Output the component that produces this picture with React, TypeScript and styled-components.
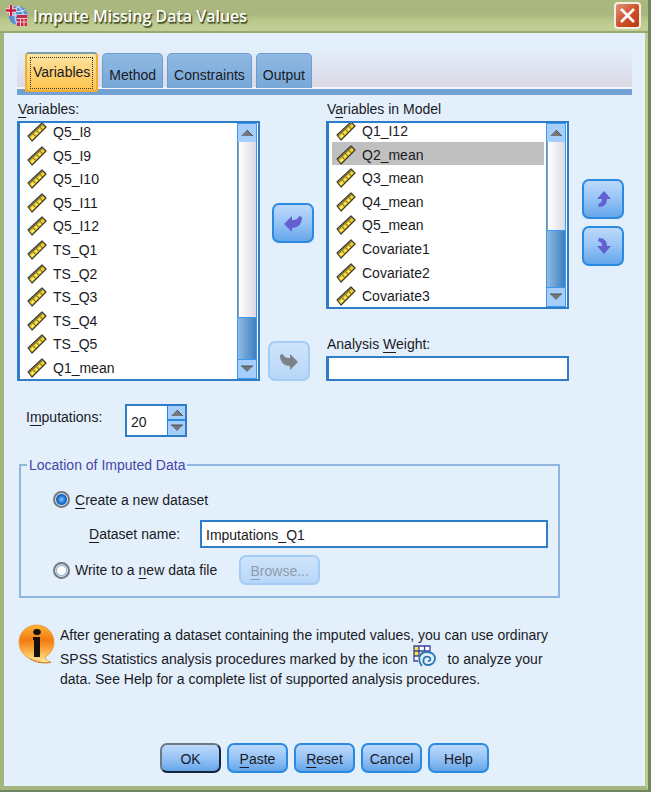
import React, { useState } from "react";
import styled, { createGlobalStyle, css } from "styled-components";

const GlobalStyle = createGlobalStyle`
  * { box-sizing: border-box; }
  body {
    margin: 0;
    background: #6f8760;
    color: #1a1a24;
    font: 14px/16px "Liberation Sans", Arial, sans-serif;
  }
  button, input { font: inherit; color: inherit; }
`;

const DialogWindow = styled.main`
  display: flex;
  flex-direction: column;
  min-height: calc(100vh - 2px);
  margin: 0 3px 2px 0;
  border: solid #a5b77e;
  border-width: 0 3px 4px 4px;
  border-left-color: #a3b57f;
  border-right-color: #b9cb8b;
  background: #e3f0fc;
`;

const TitleBar = styled.header`
  display: flex;
  align-items: center;
  height: 33px;
  margin: 0 -3px 0 -4px;
  padding: 0 6px;
  background: linear-gradient(#aab97e 0, #a9b67f 45%, #b9c78a 65%, #c2cf94 90%);
  border-bottom: 2px solid #97a873;
`;

const Title = styled.h1`
  flex: 1;
  margin: 0 0 0 5px;
  color: #fff;
  font: 600 16px/24px "Open Sans", "Noto Sans", sans-serif;
  text-shadow: 1px 1px 1px #3d4a22, 1px 2px 1px #5c6a3c;
`;

const CloseButton = styled.button`
  display: flex;
  align-items: center;
  justify-content: center;
  width: 27px;
  height: 27px;
  margin-right: 1px;
  padding: 0;
  border: 2px solid #f4efe2;
  border-radius: 4px;
  background: linear-gradient(135deg, #dd9478, #d0532c 50%, #b93a10);
`;

const Body = styled.div`
  display: flex;
  flex: 1;
  flex-direction: column;
  padding: 14px 13px 13px;
`;

const TabStrip = styled.div`
  display: flex;
  align-items: flex-end;
  gap: 4px;
  height: 48px;
  padding: 0 8px;
  border-bottom: 6px solid #71a2d3;
  background: linear-gradient(#e3f0fc, #dcd9e6 40px, #f4f6fb 40px);
`;

const Tab = styled.button<{ $selected?: boolean }>`
  height: 35px;
  margin-bottom: 1px;
  padding: 7px 6px 0;
  border: 1px solid #6a9ccf;
  border-bottom: 0;
  border-radius: 5px 5px 0 0;
  background: linear-gradient(#8fb9e2, #77a8d8);
  white-space: nowrap;
  ${(p) =>
    p.$selected &&
    css`
      height: 40px;
      margin-bottom: -3px;
      padding: 4px;
      border: 2px solid #f0ac33;
      border-top-color: #7b9cab;
      border-radius: 4px 4px 2px 2px;
      background: linear-gradient(#fce6a4, #fdd277 50%, #ffc64e);
      position: relative;
    `}
`;

const FocusMark = styled.span`
  display: block;
  height: 30px;
  padding: 6px 2px 0;
  outline: 1px dotted #3c3420;
`;

const Columns = styled.div`
  display: grid;
  grid-template-columns: minmax(0, 1fr) 66px minmax(0, 1fr) 63px;
  margin-top: 6px;
`;

const Column = styled.div`
  display: flex;
  flex-direction: column;
`;

const Caption = styled.label`
  padding: 0 1px;
  margin-bottom: 4px;
`;

const Spacer = styled.div`
  flex: 1;
`;

const ListBox = styled.div<{ $height: number }>`
  display: flex;
  height: ${(p) => p.$height}px;
  border: 2px solid #2f7cc9;
  border-left-width: 3px;
  background: #fff;
`;

const Rows = styled.ul`
  display: grid;
  flex: 1;
  grid-auto-rows: 24px 23px 24px 23px 24px;
  align-content: end;
  margin: 0 2px 0 3px;
  padding: 0;
  overflow: hidden;
  list-style: none;
`;

const Row = styled.li<{ $selected?: boolean }>`
  display: flex;
  align-items: center;
  gap: 6px;
  padding: 2px 0 0 4px;
  line-height: 14px;
  background: ${(p) => (p.$selected ? "#c0c0c0" : "transparent")};
`;

const ScrollBar = styled.div`
  display: flex;
  flex-direction: column;
  width: 20px;
  margin-right: 1px;
  border: 1px solid #3a98ee;
`;

const Track = styled.div`
  flex: 1;
  border-left: 1px solid #9a9aa2;
  background: linear-gradient(90deg, #fff, #dcd8e2);
`;

const Thumb = styled.div<{ $height: number }>`
  height: ${(p) => p.$height}px;
  border: solid #3a98ee;
  border-width: 1px 0;
  background: linear-gradient(90deg, #8fbbe3, #3d80c0);
`;

const StepButton = styled.button<{ $height: number }>`
  display: flex;
  align-items: center;
  justify-content: center;
  height: ${(p) => p.$height}px;
  padding: 0;
  border: 0;
  background: #a5cefa;
`;

const face = css`
  border: 2px solid #2a8ae2;
  border-radius: 7px;
  background: linear-gradient(#bcd9fb, #97c4f6 50%, #64a5e8);
  &:disabled {
    border-color: #a3cdf5;
    background: linear-gradient(#cfe4fb, #b7d7f8);
    color: #8f9cab;
  }
`;

const ArrowButton = styled.button`
  display: flex;
  align-items: center;
  justify-content: center;
  width: 42px;
  height: 40px;
  padding: 0;
  ${face}
`;

const MoveArea = styled.div`
  display: flex;
  flex-direction: column;
  align-items: center;
  justify-content: space-between;
  padding-top: 102px;
`;

const DisabledSlot = styled.div`
  align-self: flex-start;
  margin-left: 8px;
`;

const OrderArea = styled.div`
  display: flex;
  flex-direction: column;
  gap: 7px;
  padding: 78px 0 0 13px;
`;

const TextBox = styled.input`
  width: 100%;
  height: 25px;
  padding: 2px 4px;
  border: 2px solid #2f7cc9;
  border-left-width: 3px;
  border-radius: 0;
  background: #fff;
`;

const NameBox = styled(TextBox)`
  flex: 1;
  width: auto;
  min-width: 0;
  height: 28px;
  border-left-width: 2px;
  padding: 4px 4px 2px;
`;

const ImputationRow = styled.div`
  display: flex;
  align-items: flex-start;
  margin: 23px 0 0 9px;
`;

const ImputationLabel = styled.label`
  width: 99px;
  padding-top: 5px;
`;

const Spinner = styled.div`
  display: flex;
  height: 33px;
  border: 2px solid #2f7cc9;
  background: #fff;
`;

const SpinnerInput = styled.input`
  width: 40px;
  padding: 4px 4px 2px;
  border: 0;
  background: transparent;
`;

const SpinnerSteps = styled.div`
  display: grid;
  grid-template-rows: 1fr 1fr;
  gap: 2px;
  width: 18px;
  border-left: 1px solid #2a8ae2;
  background: #2a8ae2;
`;

const Group = styled.fieldset`
  display: flex;
  flex-direction: column;
  min-width: 0;
  margin: 20px 72px 0 2px;
  padding: 18px 10px 11px 32px;
  border: 2px solid #8fb6df;
`;

const Legend = styled.legend`
  margin-left: -26px;
  padding: 0 2px;
  color: #4545a6;
`;

const Line = styled.div<{ $indent?: number; $top?: number }>`
  display: flex;
  align-items: center;
  margin-top: ${(p) => p.$top || 0}px;
  padding-left: ${(p) => p.$indent || 0}px;
`;

const Radio = styled.input`
  appearance: none;
  width: 17px;
  height: 17px;
  margin: 0 5px 0 0;
  border: 2px solid #75797e;
  border-radius: 50%;
  background: radial-gradient(circle, #fff 4px, #8fb5dc 5px, #dfe3e6 6px);
  &:checked {
    background: radial-gradient(circle, #72b0f2 1px, #176bc9 4px, #176bc9 5px, #dfe3e6 6px);
  }
`;

const NameLabel = styled.label`
  width: 111px;
`;

const PushButton = styled.button<{ $primary?: boolean; $width?: number }>`
  width: ${(p) => p.$width || 61}px;
  height: 30px;
  padding: 2px 0 0;
  ${face}
  ${(p) =>
    p.$primary &&
    css`
      border-color: #6c7987 #14253a #14253a #6c7987;
    `}
`;

const BrowseSlot = styled.div`
  margin-left: 22px;
`;

const Note = styled.section`
  display: flex;
  align-items: flex-start;
  gap: 5px;
  margin: 26px 60px 0 1px;
`;

const NoteText = styled.p`
  margin: 0;
  padding-top: 1px;
  line-height: 20px;
`;

const Footer = styled.footer`
  display: flex;
  justify-content: center;
  gap: 6px;
  margin-top: auto;
`;

const Key = styled.u`
  text-underline-offset: 3px;
  text-decoration-thickness: 1px;
  text-decoration-skip-ink: none;
`;

const RulerIcon = () => (
  <svg width="20" height="20" viewBox="0 0 20 20" aria-hidden="true">
    <path d="M1 14 15 1 19 5 5 19z" fill="#f5d426" stroke="#3a3724" strokeWidth="1.2" strokeLinejoin="round" />
    <path d="M2 14.800 15.800 2" stroke="#77735a" strokeWidth="1.4" />
    <path d="M6 11.500l2.500 3M9.500 8.500l2.500 3M13 5.200l2.500 3" stroke="#6b5f22" strokeWidth="1" />
    <path d="M5 16l1.500-1.500M9 12l1-1M12.500 9l1-1" stroke="#fff7a8" strokeWidth="1.3" />
  </svg>
);

const Triangle = ({ down }: { down?: boolean }) => (
  <svg width="14" height="8" viewBox="0 0 14 8" aria-hidden="true">
    <path d={down ? "M1 1h12L7 7z" : "M1 7h12L7 1z"} fill="#73767b" />
    <path d={down ? "M1 1h12" : "M7 1l6 6"} stroke="#4a4f57" />
  </svg>
);

const arrowShapes = {
  left: "M-9 1-1-7v4C3-3 5-4 6-7l3 1C9 1 5 5-1 5v4z",
  right: "M9 1 1-7v4C-3-3-5-4-6-7l-3 1C-9 1-5 5 1 5v4z",
  up: "M1-8 8 0H4C4 5 1 8-4 8l-1-3C-2 4-1 3-1 0h-5z",
  down: "M1 8 8 0H4C4-5 1-8-4-8l-1 3C-2-4-1-3-1 0h-5z",
};

const TurnArrow = ({ to, color = "#6460cf" }: { to: keyof typeof arrowShapes; color?: string }) => (
  <svg width="22" height="22" viewBox="-11 -11 22 22" aria-hidden="true">
    <path d={arrowShapes[to]} fill={color} />
  </svg>
);

const AppIcon = () => (
  <svg width="22" height="22" viewBox="0 0 22 22" aria-hidden="true">
    <circle cx="12" cy="10.500" r="9.500" fill="#5c8fce" />
    <path d="M12 1c-4 5-4 14 0 19M3 10h18M12 1c5 4 6 8 6 13M5 5c5 2 10 2 14 0" fill="none" stroke="#c5dcf5" strokeWidth="1.300" />
    <path d="M5 0v11M0 5.500h10" stroke="#fff" strokeWidth="4" />
    <path d="M5 0v11M0 5.500h10" stroke="#d2153d" strokeWidth="2.500" />
    <path d="M11 10h10v11H11z" fill="#c92a4c" />
    <path d="M11 13.500h10M11 17h10M14.500 13v8M18 13v8" stroke="#f6c6d0" />
  </svg>
);

const InfoIcon = () => (
  <svg width="37" height="40" viewBox="0 0 37 40" aria-hidden="true">
    <defs>
      <linearGradient id="infoFill" x1="0" y1="0" x2="0" y2="1">
        <stop offset="0" stopColor="#fbb53a" />
        <stop offset=".4" stopColor="#f47a10" />
        <stop offset=".65" stopColor="#fba63a" />
        <stop offset="1" stopColor="#fff0a0" />
      </linearGradient>
    </defs>
    <path d="M18.500 1C28 1 36 8.500 36 18c0 7-4 12-9 15.500 1 2 3 4 6 4.800-5 1.200-10 .2-14-1.800C9 36 1 28 1 18 1 8.500 9 1 18.500 1z" fill="url(#infoFill)" stroke="#e9a048" strokeWidth="1" />
    <path d="M12 35c6 4 14 4.500 21 3.300" fill="none" stroke="#d9781c" />
    <ellipse cx="19" cy="8" rx="3.800" ry="3" fill="#14100c" />
    <path d="M15 13h7v20h-6V16h-1z" fill="#14100c" />
  </svg>
);

const ProcedureSvg = styled.svg`
  margin: 0 8px 0 1px;
  vertical-align: -3px;
`;

const ProcedureIcon = () => (
  <ProcedureSvg width="23" height="22" viewBox="0 0 23 22" aria-label="analysis procedure">
    <path d="M1 1h16v5H6v10H1z" fill="#fff" />
    <path d="M1 1h5v5H1zM1 6h5v5H1z" fill="#ffe33c" />
    <path d="M1 1h16v5H1zM1 1v15h4M6 1v10M11.500 1v5M1 11h5" fill="none" stroke="#3b3fa0" strokeWidth="1.300" />
    <path d="M9 21C4 15 6 7 14 7c5 0 8 3 8 6.500S19 20 15 20s-5-3-4.500-5.500S14 11 16 12s2 4-1 4" fill="none" stroke="#2877b0" strokeWidth="1.800" />
  </ProcedureSvg>
);

interface VariableListProps {
  label: string;
  items: string[];
  selected?: string;
  height: number;
  thumb: number;
}

const VariableList = ({ label, items, selected, height, thumb }: VariableListProps) => (
  <ListBox $height={height}>
    <Rows role="listbox" aria-labelledby={label} tabIndex={0}>
      {items.map((name) => (
        <Row key={name} role="option" aria-selected={name === selected} $selected={name === selected}>
          <RulerIcon />
          {name}
        </Row>
      ))}
    </Rows>
    <ScrollBar>
      <StepButton $height={18} aria-label="Scroll up"><Triangle /></StepButton>
      <Track />
      <Thumb $height={thumb} />
      <StepButton $height={18} aria-label="Scroll down"><Triangle down /></StepButton>
    </ScrollBar>
  </ListBox>
);

const available = ["Q5_I8", "Q5_I9", "Q5_I10", "Q5_I11", "Q5_I12", "TS_Q1", "TS_Q2", "TS_Q3", "TS_Q4", "TS_Q5", "Q1_mean"];
const inModel = ["Q1_I12", "Q2_mean", "Q3_mean", "Q4_mean", "Q5_mean", "Covariate1", "Covariate2", "Covariate3"];

export default function App() {
  const [target, setTarget] = useState("dataset");
  return (
    <>
      <GlobalStyle />
      <DialogWindow>
        <TitleBar>
          <AppIcon />
          <Title>Impute Missing Data Values</Title>
          <CloseButton aria-label="Close">
            <svg width="17" height="17" viewBox="0 0 17 17" aria-hidden="true">
              <path d="M2 2l13 13M15 2L2 15" stroke="#fff" strokeWidth="2.600" />
            </svg>
          </CloseButton>
        </TitleBar>
        <Body>
          <TabStrip role="tablist">
            <Tab role="tab" aria-selected $selected><FocusMark>Variables</FocusMark></Tab>
            <Tab role="tab">Method</Tab>
            <Tab role="tab">Constraints</Tab>
            <Tab role="tab">Output</Tab>
          </TabStrip>
          <Columns>
            <Column>
              <Caption as="span" id="availableLabel"><Key>V</Key>ariables:</Caption>
              <VariableList label="availableLabel" items={available} height={260} thumb={43} />
            </Column>
            <MoveArea>
              <ArrowButton aria-label="Remove from model"><TurnArrow to="left" /></ArrowButton>
              <DisabledSlot>
                <ArrowButton disabled aria-label="Set analysis weight"><TurnArrow to="right" color="#7d8287" /></ArrowButton>
              </DisabledSlot>
            </MoveArea>
            <Column>
              <Caption as="span" id="modelLabel">V<Key>a</Key>riables in Model</Caption>
              <VariableList label="modelLabel" items={inModel} selected="Q2_mean" height={188} thumb={58} />
              <Spacer />
              <Caption htmlFor="weight">Analysis <Key>W</Key>eight:</Caption>
              <TextBox id="weight" type="text" />
            </Column>
            <OrderArea>
              <ArrowButton aria-label="Move up"><TurnArrow to="up" /></ArrowButton>
              <ArrowButton aria-label="Move down"><TurnArrow to="down" /></ArrowButton>
            </OrderArea>
          </Columns>
          <ImputationRow>
            <ImputationLabel htmlFor="count">I<Key>m</Key>putations:</ImputationLabel>
            <Spinner>
              <SpinnerInput id="count" type="text" defaultValue="20" />
              <SpinnerSteps>
                <StepButton $height={13} aria-label="Increase"><Triangle /></StepButton>
                <StepButton $height={14} aria-label="Decrease"><Triangle down /></StepButton>
              </SpinnerSteps>
            </Spinner>
          </ImputationRow>
          <Group>
            <Legend>Location of Imputed Data</Legend>
            <Line>
              <Radio type="radio" name="target" id="dataset" checked={target === "dataset"} onChange={() => setTarget("dataset")} />
              <label htmlFor="dataset"><Key>C</Key>reate a new dataset</label>
            </Line>
            <Line $indent={36} $top={12}>
              <NameLabel htmlFor="name"><Key>D</Key>ataset name:</NameLabel>
              <NameBox id="name" type="text" defaultValue="Imputations_Q1" />
            </Line>
            <Line $top={7}>
              <Radio type="radio" name="target" id="file" checked={target === "file"} onChange={() => setTarget("file")} />
              <label htmlFor="file">Write to a <Key>n</Key>ew data file</label>
              <BrowseSlot>
                <PushButton $width={81} disabled={target !== "file"}><Key>B</Key>rowse...</PushButton>
              </BrowseSlot>
            </Line>
          </Group>
          <Note>
            <InfoIcon />
            <NoteText>
              After generating a dataset containing the imputed values, you can use ordinary
              <br />
              SPSS Statistics analysis procedures marked by the icon <ProcedureIcon /> to analyze your
              <br />
              data. See Help for a complete list of supported analysis procedures.
            </NoteText>
          </Note>
          <Footer>
            <PushButton $primary>OK</PushButton>
            <PushButton><Key>P</Key>aste</PushButton>
            <PushButton><Key>R</Key>eset</PushButton>
            <PushButton>Cancel</PushButton>
            <PushButton>Help</PushButton>
          </Footer>
        </Body>
      </DialogWindow>
    </>
  );
}
